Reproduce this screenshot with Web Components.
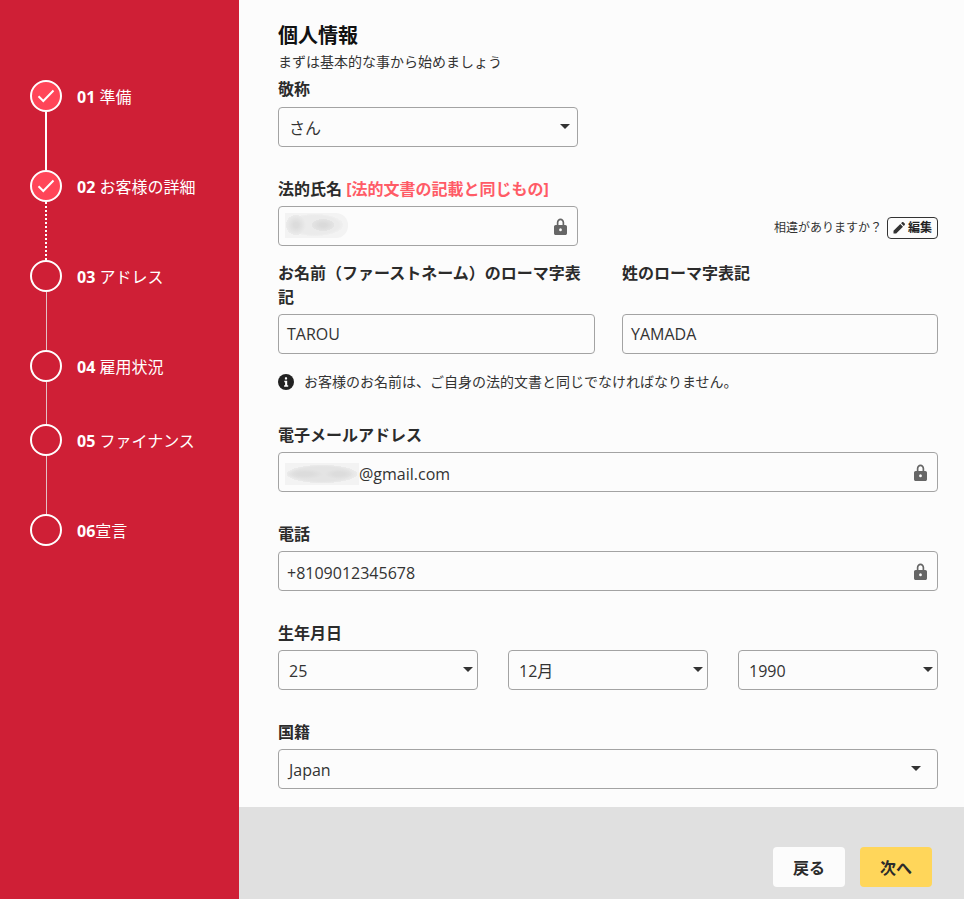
<!DOCTYPE html>
<html lang="ja"><head><meta charset="utf-8"><title>個人情報</title>
<style>
html,body{margin:0;height:899px;overflow:hidden;background:#fcfcfc;font-family:"Open Sans","Noto Sans CJK JP",sans-serif;color:#2b2b2b}
</style></head><body>
<app-shell>
  <side-nav slot="side">
    <nav-step num="01 " h="90" state="done" line="solid">準備</nav-step>
    <nav-step num="02 " h="90" state="done" line="dotted">お客様の詳細</nav-step>
    <nav-step num="03 " h="90" line="thin">アドレス</nav-step>
    <nav-step num="04 " h="74" line="thin">雇用状況</nav-step>
    <nav-step num="05 " h="90" line="thin">ファイナンス</nav-step>
    <nav-step num="06" h="32">宣言</nav-step>
  </side-nav>

  <form-head title="個人情報" sub="まずは基本的な事から始めましょう"></form-head>

  <form-field label="敬称" gap="30" style="margin-top:3px"><pick-box width="300" pad="7" style="margin-top:1px">さん</pick-box></form-field>

  <form-field gap="15">
    <span slot="label">法的氏名 <span style="color:#ff5b66">[法的文書の記載と同じもの]</span></span>
    <edit-row>
      <text-box width="300" locked><smudge-mark w="63" h="25" blobs="1"></smudge-mark></text-box>
      <span slot="side">相違がありますか？</span>
    </edit-row>
  </form-field>

  <name-row>
    <form-field label="お名前（ファーストネーム）のローマ字表記"><text-box>TAROU</text-box></form-field>
    <form-field label="姓のローマ字表記"><text-box>YAMADA</text-box></form-field>
  </name-row>

  <info-note>お客様のお名前は、ご自身の法的文書と同じでなければなりません。</info-note>

  <form-field label="電子メールアドレス" gap="30"><text-box locked low="4"><smudge-mark w="74" h="22"></smudge-mark>@gmail.com</text-box></form-field>
  <form-field label="電話" gap="30"><text-box locked low="4">+8109012345678</text-box></form-field>
  <form-field label="生年月日" gap="30">
    <date-row><pick-box pad="4" low="2">25</pick-box><pick-box pad="4">12月</pick-box><pick-box pad="4" low="2">1990</pick-box></date-row>
  </form-field>
  <form-field label="国籍"><pick-box pad="16" low="2">Japan</pick-box></form-field>

  <foot-btn slot="foot">戻る</foot-btn>
  <foot-btn slot="foot" primary>次へ</foot-btn>
</app-shell>

<script>
function el(name, css, html, init){
  customElements.define(name, class extends HTMLElement{
    connectedCallback(){
      if(this.shadowRoot) return;
      const s=this.attachShadow({mode:'open'});
      s.innerHTML='<style>'+css+'</style>'+(typeof html==='function'?html(this):html);
      if(init) init(this,s);
    }
  });
}
const LOCK='<svg width="13" height="17" viewBox="0 0 14 17" preserveAspectRatio="none"><path fill="#666" fill-rule="evenodd" d="M3 7V4.600C3 2.200 4.800.5 7 .5s4 1.700 4 4.100V7h1.200c1 0 1.800.8 1.800 1.800v6.400c0 1-.8 1.800-1.800 1.800H1.800C.8 17 0 16.200 0 15.200V8.800C0 7.800.8 7 1.800 7H3zm1.800 0h4.400V4.600C9.200 3.200 8.200 2.200 7 2.200S4.800 3.200 4.800 4.600V7zM7 10.300a1.500 1.500 0 1 0 0 3 1.500 1.500 0 0 0 0-3z"/></svg>';

el('app-shell',`
  :host{display:grid;grid-template-columns:239px 1fr;width:964px;height:899px}
  .side{background:#cf1f36;grid-row:1 / span 2}
  .form{height:807px;box-sizing:border-box;padding:22px 26px 0 39px;background:#fcfcfc;overflow:hidden}
  .foot{height:92px;box-sizing:border-box;background:#e0e0e0;display:flex;justify-content:flex-end;gap:15px;padding:40px 32px 0 0}
`,`<div class="side"><slot name="side"></slot></div><div class="form"><slot></slot></div><div class="foot"><slot name="foot"></slot></div>`);

el('side-nav',`:host{display:flex;flex-direction:column;padding:80px 0 0 30px}`,`<slot></slot>`);

el('nav-step',`
  :host{display:grid;grid-template-columns:32px 1fr;column-gap:15px;color:#fff;font-size:16px;line-height:34px}
  .track{display:flex;flex-direction:column;align-items:center}
  .dot{box-sizing:border-box;width:32px;height:32px;border:2px solid #fff;border-radius:50%;flex:none;display:flex;align-items:center;justify-content:center}
  :host([state=done]) .dot{background:#ff4558}
  .line{flex:1;width:0}
  .solid{border-left:2px solid #fff}
  .dotted{border-left:2px dotted #fff}
  .thin{border-left:1px solid #e3c0c5}
  b{font-weight:700}
  .lbl{white-space:pre}
`,t=>{
  const done=t.getAttribute('state')==='done';
  const line=t.getAttribute('line');
  return `<div class="track" style="height:${t.getAttribute('h')}px"><div class="dot">${done?'<svg width="18" height="14" viewBox="0 0 18 14"><path d="M1.500 7.200 6.300 12 16.500 1.500" fill="none" stroke="#fff" stroke-width="2"/></svg>':''}</div>${line?`<div class="line ${line}"></div>`:''}</div><div class="lbl"><b>${t.getAttribute('num')}</b><slot></slot></div>`;
});

el('form-head',`
  :host{display:block}
  h1{margin:0;font-size:20px;line-height:28px;font-weight:700;color:#111}
  p{margin:0;font-size:14px;line-height:24px;color:#333}
`,t=>`<h1>${t.getAttribute('title')}</h1><p>${t.getAttribute('sub')}</p>`);

el('form-field',`
  :host{display:flex;flex-direction:column}
  .l{display:block;flex:1;font-size:16px;font-weight:700;line-height:24px;margin-bottom:5px;color:#2b2b2b}
`,t=>`<div class="l"><slot name="label">${t.getAttribute('label')||''}</slot></div><slot></slot><div style="height:${t.getAttribute('gap')||0}px"></div>`);

const boxCss=`
  :host{display:flex;align-items:center;box-sizing:border-box;height:40px;border:1px solid #a3a3a3;border-radius:4px;background:#fcfcfc;font-size:16px;color:#333;white-space:nowrap}
  .t{flex:1;display:flex;align-items:center;min-width:0}
`;
el('pick-box',boxCss+`:host{padding-left:10px} svg{margin-top:-1px}`,
  t=>`<div class="t" style="padding-top:${t.getAttribute('low')||0}px"><slot></slot></div><svg width="10" height="5" viewBox="0 0 10 5"><path fill="#333" d="M0 0h10L5 5z"/></svg>`,
  t=>{
    if(t.hasAttribute('width'))t.style.width=t.getAttribute('width')+'px';
    t.style.paddingRight=(t.getAttribute('pad')||7)+'px';
  });
el('text-box',boxCss+`:host{padding:0 10px 0 6px} .t{padding-left:2px}`,
  t=>`<div class="t"><slot></slot></div>${t.hasAttribute('locked')?LOCK:''}`,
  (t,s)=>{
    if(t.hasAttribute('width'))t.style.width=t.getAttribute('width')+'px';
    if(t.hasAttribute('low'))s.querySelector('.t').style.paddingTop=t.getAttribute('low')+'px';
  });

el('smudge-mark',`
  :host{display:inline-block;background-color:#f3f3f3;margin-left:-2px;filter:blur(.4px)}
`,'',t=>{
  t.style.width=t.getAttribute('w')+'px';
  t.style.height=t.getAttribute('h')+'px';
  if(t.hasAttribute('blobs')){
    t.style.borderRadius='0 12px 12px 0';
    t.style.marginTop='-1px';
    t.style.backgroundImage='radial-gradient(ellipse 10px 10px at 11px 12px,#dcdcdc 25%,#e4e4e4 65%,#ebebeb 100%,transparent 100%),radial-gradient(ellipse 11px 6px at 38px 12px,#dadada 30%,#e4e4e4 100%,transparent 100%),radial-gradient(ellipse 28px 11px at 30px 12px,#ebebeb 85%,#f0f0f0 100%,transparent 100%)';
  }else{
    t.style.backgroundImage='radial-gradient(ellipse 18px 5px at 20px 11px,#dcdcdc 40%,transparent 100%),radial-gradient(ellipse 14px 5px at 54px 11px,#dcdcdc 40%,transparent 100%),radial-gradient(ellipse 35px 9px at 37px 11px,#e4e4e4 80%,#ebebeb 100%,transparent 100%)';
  }
});

el('edit-row',`
  :host{display:flex;justify-content:space-between;align-items:flex-end}
  .r{display:flex;align-items:center;gap:5px;font-size:12px;line-height:20px;color:#333;margin-bottom:7px}
  .b{box-sizing:border-box;height:22px;width:51px;border:1px solid #333;border-radius:4px;display:flex;align-items:center;justify-content:center;gap:3px;font-weight:700;color:#222;background:#fcfcfc}
`,`<slot></slot><div class="r"><slot name="side"></slot><div class="b"><svg width="12" height="12" viewBox="0 0 12 12"><path fill="#333" d="M.5 8.800 7.300 2l2.700 2.700-6.800 6.800H.5zM8.100 1.200 9 .3c.4-.4 1-.4 1.400 0l1.300 1.300c.4.4.4 1 0 1.400l-.9.900z"/></svg><span>編集</span></div></div>`);

el('name-row',`:host{display:grid;grid-template-columns:317px 316px;column-gap:27px;align-items:stretch}`,`<slot></slot>`);
el('date-row',`:host{display:grid;grid-template-columns:repeat(3,200px);column-gap:30px}`,`<slot></slot>`);

el('info-note',`
  :host{display:flex;align-items:center;gap:10px;font-size:14px;line-height:20px;color:#333;margin:18px 0 31px}
`,`<svg width="16" height="16" viewBox="0 0 16 16"><circle cx="8" cy="8" r="8" fill="#222"/><rect x="6.900" y="3.300" width="2.200" height="2.200" rx=".6" fill="#fff"/><path fill="#fff" d="M6.300 6.800h2.900v4.500h1v1.400H6.100v-1.400h1V8.200h-.8z"/></svg><span><slot></slot></span>`);

el('foot-btn',`
  :host{display:flex;align-items:center;justify-content:center;width:72px;height:40px;border-radius:4px;background:#fcfcfc;font-size:16px;font-weight:700;color:#2b2b2b}
  :host([primary]){background:#ffd65a}
`,`<slot></slot>`);
</script>
</body></html>
